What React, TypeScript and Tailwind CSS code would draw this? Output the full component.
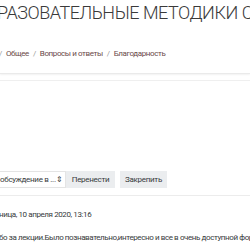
export default function App() {
  return (
    <div className="w-[250px] h-[250px] overflow-hidden bg-white text-[#373a3c]" style={{ fontFamily: 'Roboto, "Noto Sans", sans-serif' }}>
      <div className="-ml-[3px]">
        <h1 className="pt-[2px] text-[18px] leading-[22px] font-light whitespace-nowrap text-[#3a3a3a] tracking-[-0.45px]">
          РАЗОВАТЕЛЬНЫЕ МЕТОДИКИ СОВРЕМЕННОСТИ
        </h1>
        <nav className="mt-[24px] ml-[2px] flex items-center gap-[4px] whitespace-nowrap text-[8px] leading-[12px] tracking-[-0.4px]">
          <span className="text-[#999]">/</span>
          <a className="text-[#6b4a4a]">Общее</a>
          <span className="text-[#999]">/</span>
          <a className="text-[#6b4a4a]">Вопросы и ответы</a>
          <span className="text-[#999]">/</span>
          <a className="text-[#6b4a4a]">Благодарность</a>
        </nav>
      </div>
      <div className="mt-[12px] h-[2px] border-b border-[#eaeaea] shadow-[0_1px_2px_rgba(0,0,0,0.06)]" />
      <div className="mt-[6px] border-t border-[#efefef]">
        <div className="h-[90px]" />
        <div className="flex items-center whitespace-nowrap text-[8px] tracking-[-0.3px]">
          <div className="-ml-[1px] flex h-[17px] w-[67px] items-center justify-between border border-[#e4e4e4] bg-white pr-[6px]">
            <span>обсуждение в ...</span>
            <span className="text-[8px] leading-none">⇕</span>
          </div>
          <button className="h-[17px] w-[49px] bg-[#ebedef] text-[#373a3c]">Перенести</button>
          <button className="ml-[5px] h-[17px] w-[47px] bg-[#ebedef] text-[#373a3c]">Закрепить</button>
        </div>
        <div className="mt-[7px] border-t border-[#ececec]" />
        <div className="-ml-[1px] pt-[13px] text-[8px] leading-[12px] whitespace-nowrap tracking-[-0.4px]">
          <div>ница, 10 апреля 2020, 13:16</div>
          <div className="mt-[11px]">бо за лекции.Было познавательно,интересно и все в очень доступной форме</div>
        </div>
      </div>
    </div>
  );
}
